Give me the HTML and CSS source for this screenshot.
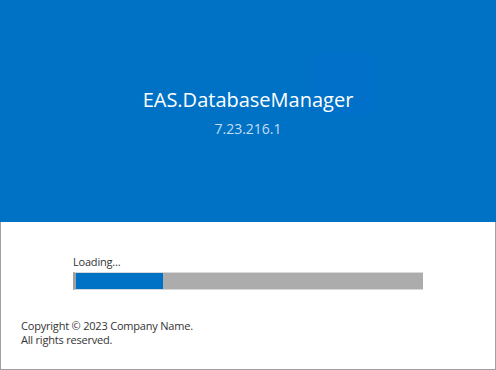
FILE: index.html
```html
<!DOCTYPE html>
<html>
<head>
<meta charset="utf-8">
<link rel="stylesheet" href="styles.css">
</head>
<body>
<div class="splash">
  <div class="header">
    <div class="mark"></div>
    <div class="title">EAS.DatabaseManager</div>
    <div class="version">7.23.216.1</div>
  </div>
  <div class="body">
    <div class="loading">
      <div class="label">Loading...</div>
      <div class="bar"><div class="fill" style="width: 87px"></div></div>
    </div>
    <div class="copyright">Copyright © 2023 Company Name.<br>All rights reserved.</div>
  </div>
</div>
</body>
</html>
```

FILE: styles.css
```css
html, body {
  margin: 0;
  padding: 0;
  background: #ffffff;
}
.splash {
  width: 496px;
  height: 370px;
  display: flex;
  flex-direction: column;
  font-family: "Open Sans", "Noto Sans", sans-serif;
}
.header {
  position: relative;
  height: 222px;
  background: #0072c6;
  display: flex;
  flex-direction: column;
  align-items: center;
  padding-top: 86px;
  box-sizing: border-box;
}
.mark {
  position: absolute;
  left: 311px;
  top: 53px;
  width: 63px;
  height: 62px;
  background: #0070c8;
}
.title {
  position: relative;
  color: #ffffff;
  font-size: 20px;
  line-height: 28px;
}
.version {
  position: relative;
  color: #c4dcf2;
  font-size: 14px;
  line-height: 20px;
  margin-top: 5px;
}
.body {
  flex: 1;
  border: 1px solid #a0a0a0;
  border-top: none;
  display: flex;
  flex-direction: column;
}
.loading {
  padding: 32px 0 0 72px;
}
.label {
  color: #333333;
  font-size: 11px;
  letter-spacing: -0.2px;
  line-height: 15px;
  margin-bottom: 3px;
}
.bar {
  width: 350px;
  height: 18px;
  box-sizing: border-box;
  background: #acacac;
  border-top: 1px solid #d8d8d8;
  border-bottom: 1px solid #d8d8d8;
  border-left: 3px solid #a0a0a0;
  display: flex;
}
.fill {
  height: 100%;
  background: #0072c6;
}
.copyright {
  margin: 29px 0 0 20px;
  color: #333333;
  font-size: 11px;
  letter-spacing: -0.2px;
  line-height: 14px;
}
```
